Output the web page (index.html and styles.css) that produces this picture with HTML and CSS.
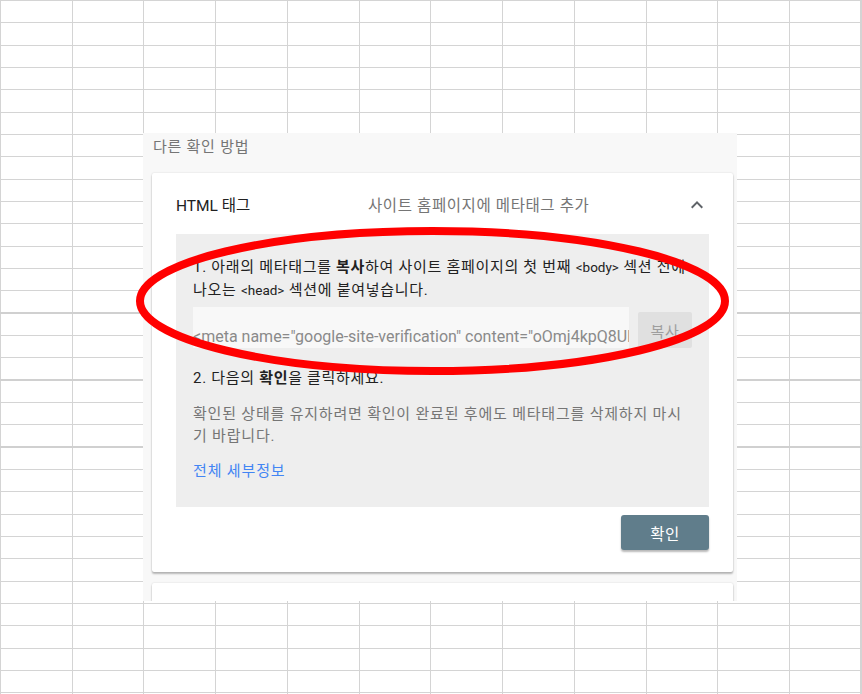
FILE: index.html
```html
<!DOCTYPE html>
<html lang="ko">
<head>
<meta charset="utf-8">
<title>HTML 태그 확인</title>
<link rel="stylesheet" href="styles.css">
</head>
<body>
<div class="sheet">
  <section class="shot">
    <div class="shot-title">다른 확인 방법</div>
    <div class="card">
      <div class="card-head">
        <div class="head-title">HTML 태그</div>
        <div class="head-sub">사이트 홈페이지에 메타태그 추가</div>
        <svg class="chev" viewBox="0 0 24 24" width="24" height="24"><path d="M7.41 15.41L12 10.83l4.59 4.58L18 14l-6-6-6 6z" fill="#5f6368"/></svg>
      </div>
      <div class="panel">
        <div class="step">
          <div class="line">1. 아래의 메타태그를 <b>복사</b>하여 사이트 홈페이지의 첫 번째 <span class="code">&lt;body&gt;</span> 섹션 전에</div>
          <div class="line">나오는 <span class="code">&lt;head&gt;</span> 섹션에 붙여넣습니다.</div>
        </div>
        <div class="field-row">
          <div class="field"><span class="field-text">&lt;meta name="google-site-verification" content="oOmj4kpQ8UhR2vX7bLq" /&gt;</span></div>
          <div class="copy">복사</div>
        </div>
        <div class="step step2"><div class="line">2. 다음의 <b>확인</b>을 클릭하세요.</div></div>
        <div class="note">
          <div class="line">확인된 상태를 유지하려면 확인이 완료된 후에도 메타태그를 삭제하지 마시</div>
          <div class="line">기 바랍니다.</div>
        </div>
        <div class="more">전체 세부정보</div>
      </div>
      <div class="actions"><div class="btn">확인</div></div>
    </div>
    <div class="card card-next"></div>
  </section>
  <svg class="ring" viewBox="0 0 862 694" width="862" height="694"><ellipse cx="432.5" cy="301" rx="292.5" ry="70" fill="none" stroke="#ff0000" stroke-width="8"/></svg>
</div>
</body>
</html>
```

FILE: styles.css
```css
* { box-sizing: border-box; }
html, body { margin: 0; padding: 0; }
body {
  width: 862px;
  height: 694px;
  overflow: hidden;
  font-family: Roboto, "Noto Sans CJK KR", sans-serif;
  background-color: #fff;
}
.sheet {
  position: relative;
  width: 862px;
  height: 694px;
  padding: 133px 0 0 143px;
  background-image:
    linear-gradient(to bottom, transparent 312px, #d0d0d0 312px 314px, transparent 314px 379px, #d0d0d0 379px 381px, transparent 381px 446px, #d0d0d0 446px 448px, transparent 448px),
    linear-gradient(to right, transparent 860px, #d4d4d4 860px 861px, transparent 861px),
    repeating-linear-gradient(to right, #d4d4d4 0 1px, transparent 1px 72px, #d4d4d4 72px 73px, transparent 73px 143px, #d4d4d4 143px 144px, transparent 144px 215px, #d4d4d4 215px 216px, transparent 216px 287px),
    repeating-linear-gradient(to bottom, #d4d4d4 0 1px, transparent 1px 22px, #d4d4d4 22px 23px, transparent 23px 45px, #d4d4d4 45px 46px, transparent 46px 67px);
}
.shot {
  width: 594px;
  height: 468px;
  overflow: hidden;
  background: #f8f8f8;
  padding-left: 9px;
}
.shot-title {
  height: 28px;
  line-height: 28px;
  padding-left: 1px;
  font-size: 15px;
  letter-spacing: 0.75px;
  color: #757575;
}
.card {
  margin-top: 12px;
  width: 581px;
  background: #fff;
  border-radius: 2px;
  box-shadow: 0 2px 2px rgba(0,0,0,0.26), 0 0 2px rgba(0,0,0,0.14);
}
.card-head {
  height: 61px;
  display: flex;
  align-items: center;
  padding: 0 24px;
}
.head-title {
  flex: 0 0 192px;
  font-size: 15.5px;
  color: #212121;
}
.head-sub {
  flex: 1;
  font-size: 15.5px;
  letter-spacing: 0.6px;
  color: #757575;
}
.chev { margin-top: 2px; }
.panel {
  margin: 0 24px;
  background: #eeeeee;
  padding: 22px 17px 25px 17px;
}
.line { white-space: nowrap; }
.step {
  font-size: 15px;
  line-height: 23px;
  letter-spacing: 0.7px;
  color: #212121;
}
.step b { font-weight: 700; }
.code { font-size: 13.5px; letter-spacing: 0; }
.field-row {
  display: flex;
  gap: 9px;
  margin-top: 5px;
  align-items: flex-end;
}
.field {
  width: 436px;
  height: 41px;
  background: #f8f8f8;
  overflow: hidden;
  display: flex;
  align-items: flex-end;
  padding-bottom: 1px;
}
.field-text {
  white-space: nowrap;
  font-size: 16px;
  line-height: 20px;
  color: #8a8a8a;
}
.copy {
  width: 54px;
  height: 36px;
  background: #e0e0e0;
  border-radius: 2px;
  color: #9e9e9e;
  font-size: 15px;
  letter-spacing: 0.6px;
  display: flex;
  align-items: center;
  justify-content: center;
}
.step2 { margin-top: 19px; }
.note {
  margin-top: 13px;
  font-size: 15px;
  line-height: 22px;
  letter-spacing: 0.8px;
  color: #757575;
}
.more {
  margin-top: 13px;
  font-size: 15px;
  line-height: 22px;
  letter-spacing: 0.85px;
  color: #4285f4;
}
.actions {
  display: flex;
  justify-content: flex-end;
  padding: 8px 24px 22px;
}
.btn {
  width: 88px;
  height: 35px;
  border-radius: 3px;
  background: #607d8b;
  color: #fff;
  font-size: 15.5px;
  letter-spacing: 0.5px;
  display: flex;
  align-items: center;
  justify-content: center;
  box-shadow: 0 2px 2px rgba(0,0,0,0.28);
}
.card-next {
  margin-top: 11px;
  height: 40px;
}
.ring {
  position: absolute;
  left: 0;
  top: 0;
  pointer-events: none;
}
```
